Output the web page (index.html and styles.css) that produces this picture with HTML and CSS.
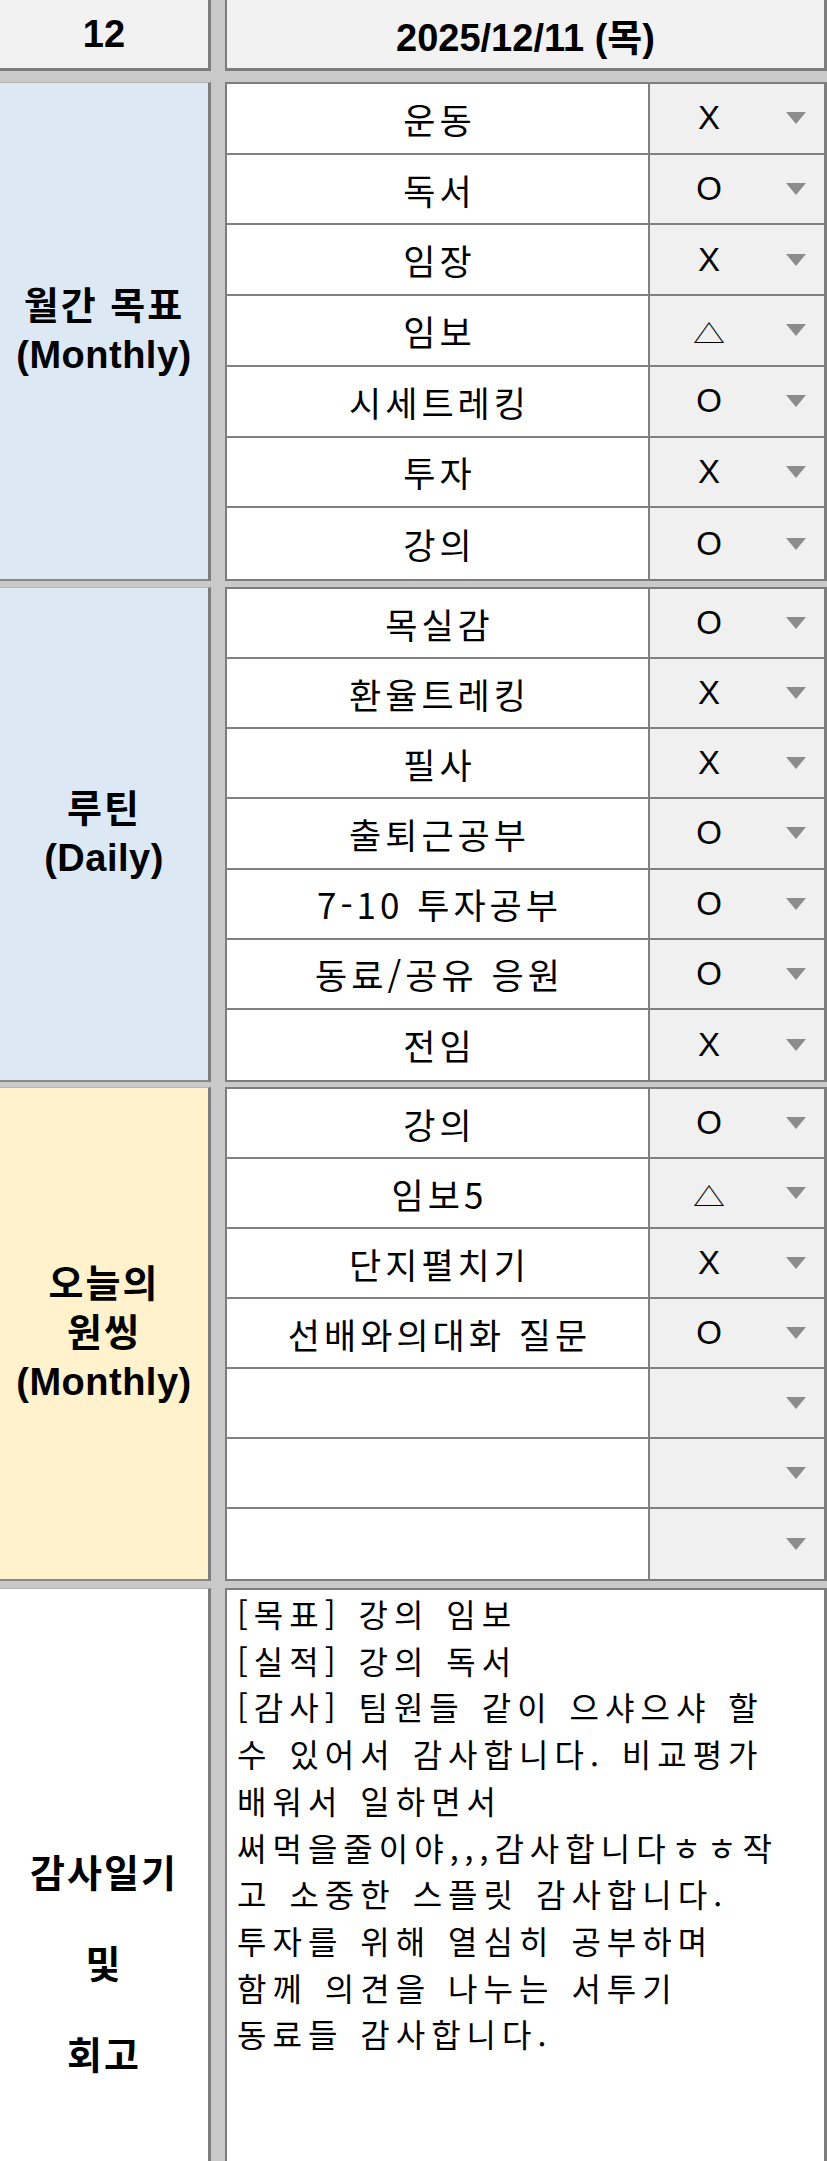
FILE: index.html
```html
<!DOCTYPE html>
<html lang="ko">
<head>
<meta charset="utf-8">
<title>2025/12/11</title>
<link rel="stylesheet" href="styles.css">
</head>
<body>
<div class="sheet">
  <div class="band band-header">
    <div class="hcell hcell-left">12</div>
    <div class="hcell hcell-right">2025/12/11 (목)</div>
  </div>

  <div class="band band-g1">
    <div class="label label-blue"><span class="ko">월간 목표</span><span>(Monthly)</span></div>
    <div class="items">
      <div class="row"><div class="name">운동</div><div class="status"><span class="val">X</span><span class="arrow"><svg width="20" height="12" viewBox="0 0 20 12"><path d="M0 0H20L10 12Z"/></svg></span></div></div>
      <div class="row"><div class="name">독서</div><div class="status"><span class="val">O</span><span class="arrow"><svg width="20" height="12" viewBox="0 0 20 12"><path d="M0 0H20L10 12Z"/></svg></span></div></div>
      <div class="row"><div class="name">임장</div><div class="status"><span class="val">X</span><span class="arrow"><svg width="20" height="12" viewBox="0 0 20 12"><path d="M0 0H20L10 12Z"/></svg></span></div></div>
      <div class="row"><div class="name">임보</div><div class="status"><span class="val"><span class="tri">△</span></span><span class="arrow"><svg width="20" height="12" viewBox="0 0 20 12"><path d="M0 0H20L10 12Z"/></svg></span></div></div>
      <div class="row"><div class="name">시세트레킹</div><div class="status"><span class="val">O</span><span class="arrow"><svg width="20" height="12" viewBox="0 0 20 12"><path d="M0 0H20L10 12Z"/></svg></span></div></div>
      <div class="row"><div class="name">투자</div><div class="status"><span class="val">X</span><span class="arrow"><svg width="20" height="12" viewBox="0 0 20 12"><path d="M0 0H20L10 12Z"/></svg></span></div></div>
      <div class="row"><div class="name">강의</div><div class="status"><span class="val">O</span><span class="arrow"><svg width="20" height="12" viewBox="0 0 20 12"><path d="M0 0H20L10 12Z"/></svg></span></div></div>
    </div>
  </div>

  <div class="band band-g2">
    <div class="label label-blue"><span class="ko">루틴</span><span>(Daily)</span></div>
    <div class="items">
      <div class="row"><div class="name">목실감</div><div class="status"><span class="val">O</span><span class="arrow"><svg width="20" height="12" viewBox="0 0 20 12"><path d="M0 0H20L10 12Z"/></svg></span></div></div>
      <div class="row"><div class="name">환율트레킹</div><div class="status"><span class="val">X</span><span class="arrow"><svg width="20" height="12" viewBox="0 0 20 12"><path d="M0 0H20L10 12Z"/></svg></span></div></div>
      <div class="row"><div class="name">필사</div><div class="status"><span class="val">X</span><span class="arrow"><svg width="20" height="12" viewBox="0 0 20 12"><path d="M0 0H20L10 12Z"/></svg></span></div></div>
      <div class="row"><div class="name">출퇴근공부</div><div class="status"><span class="val">O</span><span class="arrow"><svg width="20" height="12" viewBox="0 0 20 12"><path d="M0 0H20L10 12Z"/></svg></span></div></div>
      <div class="row"><div class="name">7-10 투자공부</div><div class="status"><span class="val">O</span><span class="arrow"><svg width="20" height="12" viewBox="0 0 20 12"><path d="M0 0H20L10 12Z"/></svg></span></div></div>
      <div class="row"><div class="name">동료/공유 응원</div><div class="status"><span class="val">O</span><span class="arrow"><svg width="20" height="12" viewBox="0 0 20 12"><path d="M0 0H20L10 12Z"/></svg></span></div></div>
      <div class="row"><div class="name">전임</div><div class="status"><span class="val">X</span><span class="arrow"><svg width="20" height="12" viewBox="0 0 20 12"><path d="M0 0H20L10 12Z"/></svg></span></div></div>
    </div>
  </div>

  <div class="band band-g3">
    <div class="label label-yellow"><span class="ko">오늘의</span><span class="ko">원씽</span><span>(Monthly)</span></div>
    <div class="items">
      <div class="row"><div class="name">강의</div><div class="status"><span class="val">O</span><span class="arrow"><svg width="20" height="12" viewBox="0 0 20 12"><path d="M0 0H20L10 12Z"/></svg></span></div></div>
      <div class="row"><div class="name">임보5</div><div class="status"><span class="val"><span class="tri">△</span></span><span class="arrow"><svg width="20" height="12" viewBox="0 0 20 12"><path d="M0 0H20L10 12Z"/></svg></span></div></div>
      <div class="row"><div class="name">단지펼치기</div><div class="status"><span class="val">X</span><span class="arrow"><svg width="20" height="12" viewBox="0 0 20 12"><path d="M0 0H20L10 12Z"/></svg></span></div></div>
      <div class="row"><div class="name">선배와의대화 질문</div><div class="status"><span class="val">O</span><span class="arrow"><svg width="20" height="12" viewBox="0 0 20 12"><path d="M0 0H20L10 12Z"/></svg></span></div></div>
      <div class="row"><div class="name"></div><div class="status"><span class="val"></span><span class="arrow"><svg width="20" height="12" viewBox="0 0 20 12"><path d="M0 0H20L10 12Z"/></svg></span></div></div>
      <div class="row"><div class="name"></div><div class="status"><span class="val"></span><span class="arrow"><svg width="20" height="12" viewBox="0 0 20 12"><path d="M0 0H20L10 12Z"/></svg></span></div></div>
      <div class="row"><div class="name"></div><div class="status"><span class="val"></span><span class="arrow"><svg width="20" height="12" viewBox="0 0 20 12"><path d="M0 0H20L10 12Z"/></svg></span></div></div>
    </div>
  </div>

  <div class="band band-final">
    <div class="label label-white"><span>감사일기</span><span>및</span><span>회고</span></div>
    <div class="journal">
      <div>[목표] 강의 임보</div>
      <div>[실적] 강의 독서</div>
      <div>[감사] 팀원들 같이 으샤으샤 할</div>
      <div>수 있어서 감사합니다. 비교평가</div>
      <div>배워서 일하면서</div>
      <div>써먹을줄이야,,,감사합니다ㅎㅎ작</div>
      <div>고 소중한 스플릿 감사합니다.</div>
      <div>투자를 위해 열심히 공부하며</div>
      <div>함께 의견을 나누는 서투기</div>
      <div>동료들 감사합니다.</div>
    </div>
  </div>
</div>
</body>
</html>
```

FILE: styles.css
```css
html, body {
  margin: 0;
  padding: 0;
}
body {
  background: #c9c9c9;
  width: 827px;
  height: 2161px;
  overflow: hidden;
  font-family: "Liberation Sans", "Noto Sans CJK KR", sans-serif;
  color: #000;
}
.sheet {
  display: flex;
  flex-direction: column;
  width: 827px;
}
.band {
  display: grid;
  grid-template-columns: 211px 1fr;
  column-gap: 14px;
  box-sizing: border-box;
}
.band-header { height: 71px; }
.band-g1 { height: 499px; margin-top: 11px; }
.band-g2 { height: 495px; margin-top: 6px; }
.band-g3 { height: 494px; margin-top: 5px; }
.band-final { height: 574px; margin-top: 7px; }

.hcell {
  background: #f2f2f2;
  display: flex;
  align-items: center;
  justify-content: center;
  font-weight: bold;
  font-size: 38px;
  border-bottom: 3px solid #7d7d7d;
  box-sizing: border-box;
}
.hcell-left { border-right: 3px solid #7d7d7d; }
.hcell-right {
  border-left: 2px solid #7d7d7d;
  border-right: 3px solid #7d7d7d;
}

.label {
  display: flex;
  flex-direction: column;
  align-items: center;
  justify-content: center;
  font-weight: bold;
  font-size: 38px;
  line-height: 49px;
  letter-spacing: 0.5px;
  border-right: 3px solid #7d7d7d;
  border-bottom: 2px solid #8a8a8a;
  border-top: 1px solid #b5b5b5;
  box-sizing: border-box;
}
.label .ko { letter-spacing: 2px; }
.label-blue { background: #dde8f5; }
.label-yellow { background: #fff2cc; }
.label-white {
  background: #fff;
  justify-content: flex-start;
  padding-top: 240px;
  line-height: 91px;
  letter-spacing: 2px;
  border-bottom: none;
}

.items {
  display: grid;
  grid-template-rows: repeat(7, 1fr);
  border: 2px solid #7d7d7d;
  border-right-width: 3px;
  background: #fff;
  box-sizing: border-box;
}
.row {
  display: grid;
  grid-template-columns: 423px 1fr;
  border-bottom: 2px solid #808080;
}
.row:last-child { border-bottom: none; }
.name {
  display: flex;
  align-items: center;
  justify-content: center;
  padding-left: 4px;
  font-family: "Noto Sans CJK KR", "Liberation Sans", sans-serif;
  font-size: 35px;
  letter-spacing: 4px;
  border-right: 2px solid #808080;
  background: #fff;
}
.status {
  display: flex;
  align-items: center;
  background: #f0f0f0;
}
.val {
  flex: 1;
  text-align: center;
  font-size: 33px;
  font-family: "Liberation Sans", sans-serif;
}
.tri {
  display: inline-block;
  font-family: "Noto Sans CJK KR", sans-serif;
  font-size: 32px;
  transform: scaleY(0.78) translateY(3px);
}
.arrow {
  width: 56px;
  display: flex;
  justify-content: center;
  align-items: center;
}
.arrow svg path { fill: #8c8c8c; }

.journal {
  background: #fff;
  border-left: 2px solid #7d7d7d;
  border-right: 3px solid #7d7d7d;
  border-top: 2px solid #7d7d7d;
  padding: 0 0 0 10px;
  font-family: "Noto Sans CJK KR", "Liberation Sans", sans-serif;
  font-size: 32px;
  line-height: 46.7px;
  letter-spacing: 6px;
  word-spacing: 2px;
  white-space: nowrap;
}
```
